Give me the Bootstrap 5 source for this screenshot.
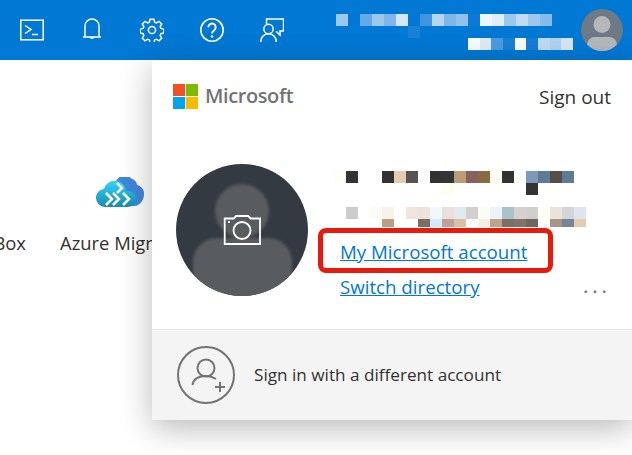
<!DOCTYPE html>
<html lang="en">

<head>
    <meta charset="UTF-8">
    <title>Azure portal</title>
    <link href="https://cdn.jsdelivr.net/npm/bootstrap@5.3.6/dist/css/bootstrap.min.css" rel="stylesheet">
    <style>
        html, body { height: 100%; }
        body { font-family: "Open Sans", "Liberation Sans", sans-serif; background: #fff; overflow: hidden; color: #323130; }
        .topbar { height: 60px; background: #0078d4; }
        .top-icons { padding-left: 20px; gap: 36px; }
        .top-icons svg { display: block; width: 24px; height: 24px; fill: none; stroke: #fff; stroke-width: 1.5; }
        .mosaic-row { display: flex; height: 12px; }
        .mosaic-row i { display: block; flex: none; width: 12px; height: 100%; }
        .top-mosaic { width: 240px; margin-right: 5px; margin-top: 4px; }
        .top-mosaic .short i { width: 11.67px; }
        .top-avatar { width: 42px; height: 42px; margin-right: 9px; }
        .tiles { padding-top: 117px; margin-left: -69px; }
        .tile { font-size: 18.400px; white-space: nowrap; }
        .tile svg { display: block; width: 50px; height: 32px; margin: 0 auto; }
        .tile-label { margin-top: 22px; line-height: 24px; }
        .tile-box { width: 95px; }
        .tile-azure { width: 122px; margin-left: 33px; }
        .acct-panel { position: absolute; top: 60px; left: 152px; width: 480px; height: 360px; background: #fff; box-shadow: 0 8px 30px rgba(0, 0, 0, .28); }
        .panel-head { padding: 24px 21px 0 21px; height: 104px; }
        .ms-logo { display: grid; grid-template-columns: 12px 12px; grid-auto-rows: 12px; gap: 1px; }
        .ms-name { font-size: 20px; font-weight: 600; color: #737373; margin-left: 7px; line-height: 24px; letter-spacing: -.4px; }
        .sign-out { font-size: 19px; color: #323130; text-decoration: none; line-height: 26px; }
        .panel-main { padding-left: 24px; height: 165px; }
        .big-avatar { width: 132px; height: 132px; flex: none; }
        .acct-info { margin-left: 10px; width: 306px; padding-top: 7px; }
        .acct-mosaic { height: 56px; padding-left: 16px; }
        .acct-mosaic .clip { height: 8px; }
        .acct-link { font-size: 18.700px; color: #0078d4; line-height: 24px; }
        .hilite { border: 5px solid #e81a0c; border-radius: 8px; width: 235px; height: 45px; margin-top: 1px; padding: 7px 0 0 17px; }
        .link-line { padding-left: 22px; margin-top: 2px; padding-right: 13px; }
        .dots { color: #737373; font-weight: 600; letter-spacing: 4.300px; font-size: 18px; line-height: 24px; margin-top: -1px; }
        .panel-foot { height: 91px; background: #f4f4f4; border-top: 1px solid #e8e8e8; padding-left: 25px; }
        .add-icon { width: 58px; height: 58px; fill: none; stroke: #737373; stroke-width: 2; }
        .foot-text { font-size: 17.150px; margin-left: 19px; }
    </style>
</head>

<body>
    <nav class="topbar d-flex align-items-center justify-content-between">
        <div class="top-icons d-flex align-items-center">
            <svg viewBox="0 0 24 24"><rect x="0.75" y="2.2" width="22.5" height="19.6"/><path d="M5 7.5l6 4-6 4M12 16.5h6"/></svg>
            <svg viewBox="0 0 24 24"><path d="M5 19V8a7 7 0 0 1 14 0v11M3 19h18M10 19a2.200 2.200 0 0 0 4 0"/></svg>
            <svg viewBox="0 0 24 24"><circle cx="12" cy="12" r="3.6"/><path d="M10 .8h4l.7 3.1 1.9.8 2.7-1.7 2.8 2.8-1.7 2.7.8 1.9 3 .7v4l-3 .7-.8 1.9 1.700 2.700-2.800 2.800-2.700-1.700-1.900.8-.7 3h-4l-.7-3-1.900-.8-2.700 1.700-2.800-2.800 1.700-2.700-.8-1.900-3-.7v-4l3-.7.8-1.900-1.700-2.700 2.800-2.800 2.700 1.700 1.900-.8z" transform="translate(.4 .4) scale(.967)"/></svg>
            <svg viewBox="0 0 24 24"><circle cx="12" cy="12" r="11.2" stroke-width="1.6"/><path d="M8.3 9.2a3.7 3.7 0 1 1 5.9 3c-1.500 1-2.200 1.800-2.200 3.300" stroke-width="1.900"/><circle cx="12" cy="18.500" r="1.200" fill="#fff" stroke="none"/></svg>
            <svg viewBox="0 0 24 24"><path d="M6.500 6V1h17v12h-3.500v4l-3.800-3.600"/><circle cx="8.500" cy="11" r="4.700"/><path d="M.7 24c0-4.500 3-8.200 7.800-8.200s7.800 3.700 7.800 8.200"/></svg>
        </div>
        <div class="d-flex align-items-center">
            <div id="topMosaic" class="top-mosaic"></div>
            <svg class="top-avatar" viewBox="0 0 42 42"><defs><clipPath id="topClip"><circle cx="21" cy="21" r="21"/></clipPath></defs><circle cx="21" cy="21" r="21" fill="#6e7a86"/><g clip-path="url(#topClip)" fill="#b4b8bb"><circle cx="21" cy="15.500" r="8.500"/><rect x="6" y="28" width="30" height="20" rx="8"/></g></svg>
        </div>
    </nav>

    <div class="tiles d-flex">
        <div class="tile tile-box text-end"><svg viewBox="0 0 50 32"></svg><div class="tile-label">Box</div></div>
        <div class="tile tile-azure text-center">
            <svg viewBox="0 0 50 32">
                <defs><linearGradient id="cloudFront" x1="0" y1="0" x2="0" y2="1"><stop offset="0" stop-color="#32d4f5"/><stop offset="1" stop-color="#198ab3"/></linearGradient></defs>
                <path d="M20 6a10 10 0 0 1 17-4 7 7 0 0 1 5 6 8.500 8.500 0 0 1 7 9c0 6-4 12-10 12H24z" fill="#3f87db"/>
                <path d="M10 30a9 9 0 0 1-9-9c0-5 3.500-8.500 8-9 2-6 7-9 13-8 5 1 9 5 9 10 6-1 10 3 10 8s-4 8-9 8z" fill="url(#cloudFront)"/>
                <path d="M22 6l5 5-5 5M11 16l6 6-6 6M18 16l6 6-6 6M28 16l6 6-6 6" fill="none" stroke="#fff" stroke-width="2.500"/>
            </svg>
            <div class="tile-label">Azure Migrate</div>
        </div>
    </div>

    <div class="acct-panel d-flex flex-column">
        <div class="panel-head d-flex justify-content-between align-items-start">
            <div class="d-flex">
                <div class="ms-logo">
                    <i style="background:#f25022"></i><i style="background:#7fba00"></i>
                    <i style="background:#00a4ef"></i><i style="background:#ffb900"></i>
                </div>
                <span class="ms-name">Microsoft</span>
            </div>
            <a href="#" class="sign-out">Sign out</a>
        </div>
        <div class="panel-main d-flex">
            <svg class="big-avatar" viewBox="0 0 132 132">
                <defs><clipPath id="bigClip"><circle cx="66" cy="66" r="66"/></clipPath><filter id="soft"><feGaussianBlur stdDeviation="1.500"/></filter></defs>
                <circle cx="66" cy="66" r="66" fill="#343a41"/>
                <g clip-path="url(#bigClip)" fill="#585c5f" filter="url(#soft)"><circle cx="66" cy="47" r="27"/><rect x="17" y="74" width="99" height="70" rx="24"/></g>
                <path d="M48.700 54.500h9l2.500-2.500h12l2.500 2.500h9.300V80H48.700z" fill="none" stroke="#fff" stroke-width="1.800"/>
                <circle cx="66" cy="66.500" r="8.500" fill="none" stroke="#fff" stroke-width="1.800"/>
                <rect x="52" y="57" width="2" height="2" fill="#fff"/>
            </svg>
            <div class="acct-info">
                <div id="acctMosaic" class="acct-mosaic"></div>
                <div class="hilite"><a href="#" class="acct-link">My Microsoft account</a></div>
                <div class="link-line d-flex justify-content-between">
                    <a href="#" class="acct-link">Switch directory</a>
                    <span class="dots">...</span>
                </div>
            </div>
        </div>
        <div class="panel-foot d-flex align-items-center">
            <svg class="add-icon" viewBox="0 0 58 58">
                <circle cx="29" cy="29" r="28"/>
                <circle cx="29" cy="22" r="8.500"/>
                <path d="M15.500 39c1-6 6-9 13.500-9 4 0 7 1 10 3M38 41h10M43 36v10"/>
            </svg>
            <span class="foot-text">Sign in with a different account</span>
        </div>
    </div>

    <script src="https://cdn.jsdelivr.net/npm/bootstrap@5.3.6/dist/js/bootstrap.bundle.min.js"></script>
    <script>
        // blurred-out account name and directory: each value is one cell, '' leaves a hole
        const topRows = [
            { cells: ['#9cc8ee', '', '#64aae8', '#9cc8ee', '#7eb8ea', '#d6e8f8', '', '#3e95e0', '#b5d5f3', '#7cb8ea', '#90c2ec', '#0a7ad6', '#eef6fc', '#e0eefa', '#9cc8ee', '#c0dcf3', '#9cc8ee', '#84bcea'] },
            { cells: ['', '', '', '', '', '', '#1a80d8'] },
            { cls: 'short', pad: 132, cells: ['#f8fafe', '#dfecf8', '#4a9ce0', '#1a7ed6', '#f8fafe', '#167cd8', '#c0daf2', '#b0d2f0', '#d4e6f5'] }
        ];
        const acctRows = [
            { cells: ['#fffdf5', '#333', '', '', '#333', '#e3ccb0', '#555', '', '#333', '#33333a', '#bd9b76', '#8c5f5f', '#8a6a42', '#fffdf5', '#333', '', '#7e97bc', '#5e7b94', '#554d46', '#5e7b94'] },
            { cells: ['', '', '', '', '', '', '', '', '', '#fffdf0', '', '', '', '', '', '', '#333'] },
            { cells: [] },
            { cells: ['', '#ccc', '', '#fdfbf6', '#f8f2ea', '', '#efe5dc', '#ece3da', '#eef8fd', '#e9e0dc', '#e0e8f0', '#d0d0d0', '#fdfbf6', '#ebf4fb', '#a9c3cd', '#d8d0cd', '#d0cfcc', '#fffdf5', '#ebe2db', '#d3d5d8', '#dde6ee'] },
            { cls: 'clip', cells: ['', '', '', '', '#bb9f85', '', '', '#7a6e62', '#d2eafa', '#c0a09a', '#dcc0a0', '#fbfbfb', '#f5f0e3', '#c0a488', '#7a6e65', '#80746a', '#6e6660', '', '#a8958a', '#75869b', '#e3ccb0'] }
        ];

        function pintarMosaico(id, rows) {
            document.getElementById(id).innerHTML = rows.map(row => `
                <div class="mosaic-row ${row.cls || ''}" ${row.pad ? `style="padding-left:${row.pad}px"` : ''}>
                    ${row.cells.map(c => `<i style="background:${c || 'transparent'}"></i>`).join('')}
                </div>`).join('');
        }

        pintarMosaico('topMosaic', topRows);
        pintarMosaico('acctMosaic', acctRows);
    </script>
</body>

</html>
